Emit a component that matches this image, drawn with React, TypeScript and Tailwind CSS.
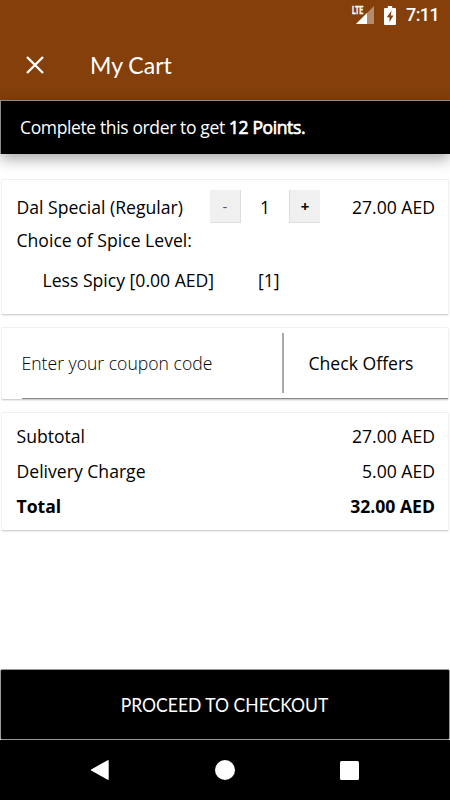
import React, { useState } from "react";

const totals = [
  { label: "Subtotal", value: "27.00 AED" },
  { label: "Delivery Charge", value: "5.00 AED" },
  { label: "Total", value: "32.00 AED", bold: true },
];

const cardClass =
  "mx-px rounded-[2px] border border-[#f0f0f0] border-b-[#d2d2d2] bg-white shadow-[0_1px_1px_rgba(0,0,0,0.08)]";

const StatusBar = () => (
  <div className="flex h-[30px] items-center justify-end pr-[12px]">
    {/* LTE signal */}
    <div className="relative mr-[10px] h-[19px] w-[23px]">
      <svg className="h-full w-full" viewBox="0 0 23 19">
        <path d="M23 0V18H5Z" fill="#fff" fillOpacity="0.4" />
        <path d="M16 7V18H5Z" fill="#fff" />
      </svg>
      <span className="absolute left-px top-0 origin-left scale-x-[0.7] bg-[#843f0b] pr-px font-['Roboto',sans-serif] text-[10px] font-bold leading-[9px] text-white [-webkit-text-stroke:0.300px_white]">
        LTE
      </span>
    </div>
    <svg className="mr-[10px] h-[19px] w-[12px]" viewBox="0 0 12 19">
      <path d="M3.8 0h4.4v2H11a1 1 0 0 1 1 1v15a1 1 0 0 1-1 1H1a1 1 0 0 1-1-1V3a1 1 0 0 1 1-1h2.800Z" fill="#fff" />
      <path d="M7.600 4.500 2.800 11.300h2.700v4.800L9.500 9.400H6.700Z" fill="#843f0b" />
    </svg>
    <span className="w-[32px] font-['Roboto',sans-serif] text-[18px] font-medium leading-none tracking-[-0.600px] text-white">
      7:11
    </span>
  </div>
);

const NavigationBar = () => (
  <div className="flex h-[60px] items-center justify-around bg-black px-[37px]">
    <svg className="h-5 w-5" viewBox="0 0 20 20">
      <path d="M18 .8v18.400L1.500 10Z" fill="#fff" stroke="#fff" strokeWidth="1.400" strokeLinejoin="round" />
    </svg>
    <div className="h-5 w-5 rounded-full bg-white" />
    <div className="mr-px h-[19px] w-[19px] rounded-[1.500px] bg-white" />
  </div>
);

const App = () => {
  const [quantity, setQuantity] = useState(1);
  const [coupon, setCoupon] = useState("");

  return (
    <div className="flex h-[800px] w-[450px] flex-col overflow-hidden bg-white font-['Open_Sans',sans-serif] text-[17.600px] leading-6 text-black">
      <header className="h-[100px] bg-[#843f0b]">
        <StatusBar />
        <div className="flex h-[70px] items-center pl-[26px]">
          <button aria-label="Close">
            <svg className="h-[18px] w-[18px]" viewBox="0 0 18 18" fill="none" stroke="#fff" strokeWidth="2.400">
              <path d="M1 1l16 16M17 1 1 17" />
            </svg>
          </button>
          <h1 className="ml-[46px] origin-left scale-x-[0.960] font-['Lato',sans-serif] text-[24px] leading-none text-white">
            My Cart
          </h1>
        </div>
      </header>

      <div className="flex h-[54px] shrink-0 items-center border-l border-t border-[#8b8b8b] bg-black pb-px pl-[19px] text-[17.500px] tracking-[-0.370px] text-white shadow-[0_5px_14px_rgba(0,0,0,0.350)]">
        <p>
          Complete this order to get <span className="[-webkit-text-stroke:0.700px_white]">12 Points.</span>
        </p>
      </div>

      <main className="flex-1 pt-[25px]">
        <section className={`${cardClass} h-[136px] pl-[14.500px] pr-[13px] pt-[10px]`}>
          <div className="flex items-center">
            <span className="w-[193.500px]">Dal Special (Regular)</span>
            <button
              className="h-[33px] w-[31px] border-b border-r border-[#dedede] bg-[#f0f0f0] text-[15px] text-[#555]"
              onClick={() => setQuantity(Math.max(1, quantity - 1))}
            >
              -
            </button>
            <span className="w-[48px] text-center">{quantity}</span>
            <button
              className="h-[33px] w-[31px] border-b border-l border-[#dedede] bg-[#f0f0f0] text-[15px] font-bold"
              onClick={() => setQuantity(quantity + 1)}
            >
              +
            </button>
            <span className="flex-1 text-right">27.00 AED</span>
          </div>
          <p className="mt-[5px]">Choice of Spice Level:</p>
          <div className="mt-4 flex pl-[26px]">
            <span className="w-[215.500px]">Less Spicy [0.00 AED]</span>
            <span>[1]</span>
          </div>
        </section>

        <section className={`${cardClass} mt-3 flex h-[73px] flex-col pl-[19.500px]`}>
          <div className="flex flex-1 items-center border-b border-[#888]">
            <input
              className="w-[260.500px] bg-transparent font-light outline-none placeholder:text-black"
              placeholder="Enter your coupon code"
              value={coupon}
              onChange={(e) => setCoupon(e.target.value)}
            />
            <div className="h-[60px] w-[1.500px] bg-[#aaa]" />
            <button className="ml-[25px]">Check Offers</button>
          </div>
        </section>

        <section className={`${cardClass} mt-3 flex h-[119px] flex-col gap-[11px] pl-[14.500px] pr-[13px] pt-[11px]`}>
          {totals.map((row) => (
            <div key={row.label} className={`flex justify-between ${row.bold ? "font-bold" : ""}`}>
              <span>{row.label}</span>
              <span>{row.value}</span>
            </div>
          ))}
        </section>
      </main>

      <button className="h-[71px] shrink-0 rounded-[2px] border border-[#9a9a9a] bg-black pb-[2px] font-['Lato',sans-serif] text-[20px] text-white">
        <span className="inline-block scale-x-[0.876]">PROCEED TO CHECKOUT</span>
      </button>
      <NavigationBar />
    </div>
  );
};

export default App;
